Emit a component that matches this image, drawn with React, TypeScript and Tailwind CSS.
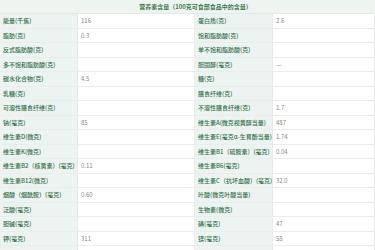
const rows: [string, string, string, string][] = [
  ["能量(千焦)", "116", "蛋白质(克)", "2.6"],
  ["脂肪(克)", "0.3", "饱和脂肪酸(克)", ""],
  ["反式脂肪酸(克)", "", "单不饱和脂肪酸(克)", ""],
  ["多不饱和脂肪酸(克)", "", "胆固醇(毫克)", "—"],
  ["碳水化合物(克)", "4.5", "糖(克)", ""],
  ["乳糖(克)", "", "膳食纤维(克)", ""],
  ["可溶性膳食纤维(克)", "", "不溶性膳食纤维(克)", "1.7"],
  ["钠(毫克)", "85", "维生素A(微克视黄醇当量)", "487"],
  ["维生素D(微克)", "", "维生素E(毫克α-生育酚当量)", "1.74"],
  ["维生素K(微克)", "", "维生素B1（硫胺素）(毫克)", "0.04"],
  ["维生素B2（核黄素）(毫克)", "0.11", "维生素B6(毫克)", ""],
  ["维生素B12(微克)", "", "维生素C（抗坏血酸）(毫克)", "32.0"],
  ["烟酸（烟酰胺）(毫克)", "0.60", "叶酸(微克叶酸当量)", ""],
  ["泛酸(毫克)", "", "生物素(微克)", ""],
  ["胆碱(毫克)", "", "磷(毫克)", "47"],
  ["钾(毫克)", "311", "镁(毫克)", "58"],
  ["", "", "", ""],
];

function Label({ text }: { text: string }) {
  return (
    <div className="flex items-center pl-[3px] bg-[#ebf4f0] text-[#35704d] font-medium border-r border-[#e3ece7] whitespace-nowrap overflow-hidden">
      {text}
    </div>
  );
}

function Value({ text }: { text: string }) {
  return (
    <div className="flex items-center pl-[3px] text-[#8a8a8a] border-r border-[#ececec] whitespace-nowrap">
      {text}
    </div>
  );
}

export default function App() {
  return (
    <div className="h-[250px] w-[375px] overflow-hidden bg-white text-[6px] leading-none font-['Noto_Sans_CJK_SC','Noto_Sans',sans-serif]">
      <div className="flex h-[14.3px] items-center justify-center bg-[#eef5f1] border-b border-[#e4ebe7] pl-[16px] font-bold text-[#3d7a52]">
        营养素含量（100克可食部食品中的含量）
      </div>
      {rows.map((r, i) => (
        <div
          key={i}
          className="grid h-[14.5px] grid-cols-[78px_117px_78px_1fr] border-b border-[#ececec]"
        >
          <Label text={r[0]} />
          <Value text={r[1]} />
          <Label text={r[2]} />
          <Value text={r[3]} />
        </div>
      ))}
    </div>
  );
}
